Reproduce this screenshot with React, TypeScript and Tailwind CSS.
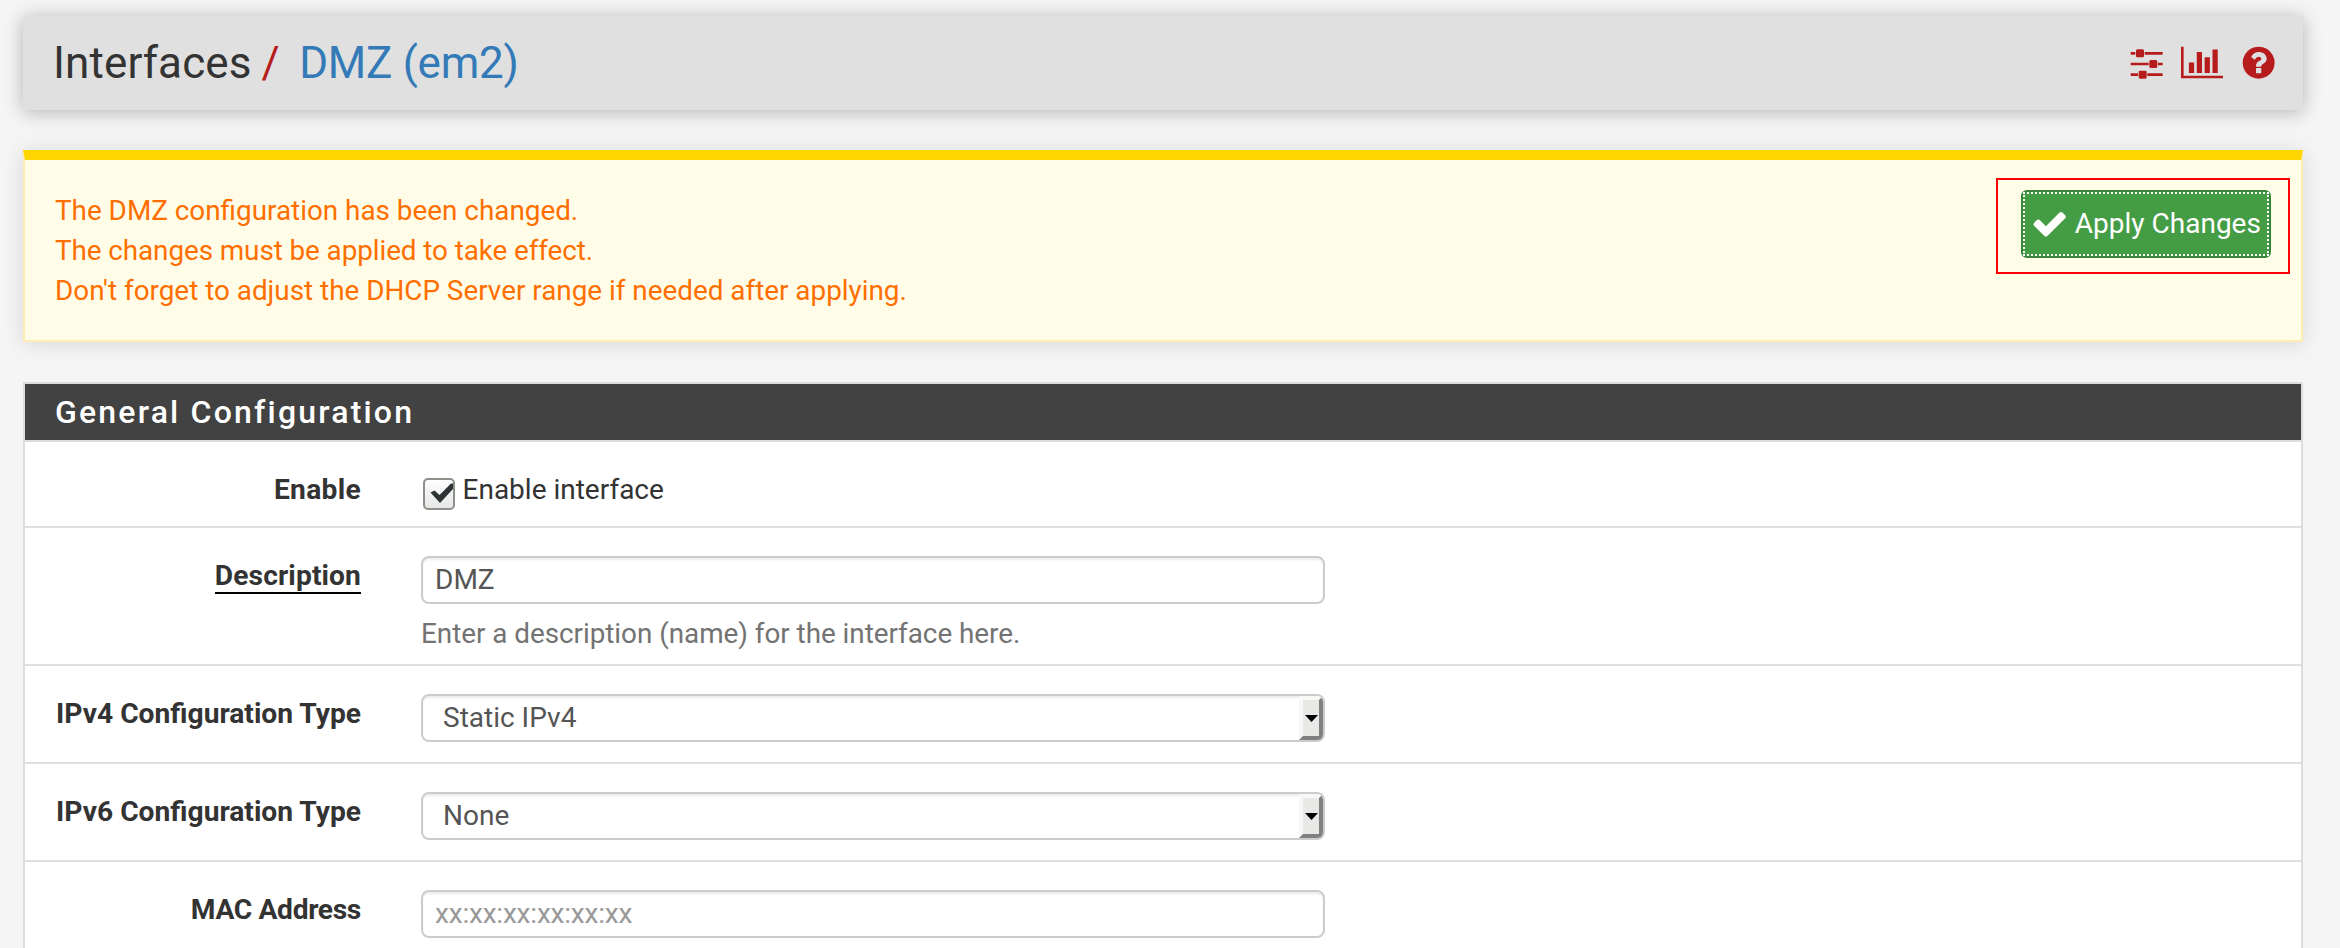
import type { ReactNode } from "react";

const PATHS = {
  sliders:
    "M480 1408v128h-352v-128h352zm352-128q26 0 45 19t19 45v256q0 26-19 45t-45 19h-256q-26 0-45-19t-19-45v-256q0-26 19-45t45-19h256zm160-384v128h-864v-128h864zm-640-512v128h-224v-128h224zm1312 1024v128h-736v-128h736zm-960-1152q26 0 45 19t19 45v256q0 26-19 45t-45 19h-256q-26 0-45-19t-19-45v-256q0-26 19-45t45-19h256zm640 512q26 0 45 19t19 45v256q0 26-19 45t-45 19h-256q-26 0-45-19t-19-45v-256q0-26 19-45t45-19h256zm320 128v128h-224v-128h224zm0-512v128h-864v-128h864z",
  chart:
    "M640 896v512h-256v-512h256zm384-512v1024h-256v-1024h256zm1024 1152v128h-2048v-1536h128v1408h1920zm-640-896v768h-256v-768h256zm384-384v1152h-256v-1152h256z",
  help:
    "M1024 1376v-192q0-14-9-23t-23-9h-192q-14 0-23 9t-9 23v192q0 14 9 23t23 9h192q14 0 23-9t9-23zm256-672q0-88-55.500-163t-138.500-116-170-41q-243 0-371 213-15 24 8 42l132 100q7 6 19 6 16 0 25-12 53-68 86-92 34-24 86-24 48 0 85.500 26t37.500 59q0 38-20 61t-68 45q-63 28-115.500 86.500t-52.500 125.500v36q0 14 9 23t23 9h192q14 0 23-9t9-23q0-19 21.500-49.500t54.500-49.500q32-18 49-28.500t46-35 44.500-48 28-60.500 12.500-81zm384 192q0 209-103 385.500t-279.500 279.500-385.500 103-385.500-103-279.500-279.500-103-385.500 103-385.500 279.500-279.500 385.500-103 385.500 103 279.500 279.500 103 385.500z",
  check:
    "M1671 566q0 40-28 68l-724 724-136 136q-28 28-68 28t-68-28l-136-136-362-362q-28-28-28-68t28-68l136-136q28-28 68-28t68 28l294 295 656-657q28-28 68-28t68 28l136 136q28 28 28 68z",
};

function Icon({ name, wide = false }: { name: keyof typeof PATHS; wide?: boolean }) {
  return (
    <svg
      viewBox={wide ? "0 0 2048 1792" : "0 0 1792 1792"}
      className={wide ? "h-[37px] w-[42px] shrink-0" : "h-[37.33px] w-[37.33px] shrink-0"}
      fill="currentColor"
      aria-hidden="true"
    >
      <path d={PATHS[name]} />
    </svg>
  );
}

function Row({
  label,
  required = false,
  tracking = "",
  className,
  children,
}: {
  label: string;
  required?: boolean;
  tracking?: string;
  className: string;
  children: ReactNode;
}) {
  return (
    <div className={`flex gap-[60px] border-b-2 border-[#e0e0e0] pt-7 ${className}`}>
      <div className={`w-[336px] shrink-0 text-right text-[28.200px] leading-10 font-bold whitespace-nowrap ${tracking}`}>
        <span className={required ? "inline-block h-[38px] border-b-2 border-black" : undefined}>{label}</span>
      </div>
      <div className="w-[904px]">{children}</div>
    </div>
  );
}

const FIELD =
  "flex h-12 w-full items-center rounded-lg border-2 border-[#ccc] bg-white text-[28px] leading-10 text-[#555] shadow-[inset_0_2px_2px_rgba(0,0,0,0.075)]";

function Select({ value }: { value: string }) {
  return (
    <div className={`${FIELD} justify-between overflow-hidden pl-5`}>
      <span>{value}</span>
      <span className="flex h-11 w-6 items-center justify-center border-4 border-t-[#f8f8f7] border-r-[#808080] border-b-[#808080] border-l-[#f8f8f7] bg-[#e8e8e6]">
        <svg viewBox="0 0 13 7" className="h-[7px] w-[13px] shrink-0" aria-hidden="true">
          <path d="M0 0h13L6.500 7z" fill="#000" />
        </svg>
      </span>
    </div>
  );
}

export default function App() {
  return (
    <div className="h-[948px] overflow-hidden bg-[#f5f5f5] px-[23px] pt-4 pr-[37px] font-['Roboto',sans-serif] text-[#333]">
      <header className="flex h-[94px] items-center justify-between bg-[#e0e0e0] pr-[25.500px] pl-[30px] shadow-[0_2px_18px_rgba(0,0,0,0.27)]">
        <h1 className="flex text-[44px] leading-[94px]">
          <span className="tracking-[0.100px]">Interfaces</span>
          <span className="ml-[10px] text-[#b71c1c]">/</span>
          <a className="ml-[19.500px] tracking-[-0.250px] text-[#337ab7]">DMZ (em2)</a>
        </h1>
        <nav className="flex items-center text-[#b71c1c]">
          <Icon name="sliders" />
          <span className="ml-[15.400px]">
            <Icon name="chart" wide />
          </span>
          <span className="ml-[17.300px]">
            <Icon name="help" />
          </span>
        </nav>
      </header>

      <section className="mt-10 flex h-[192px] justify-between border-2 border-t-10 border-[#ffecb3] border-t-[#ffd600] bg-[#fffde7] pt-[30px] pr-[30px] pl-[30px] shadow-[0_2px_20px_rgba(0,0,0,0.12)]">
        <div className="pt-px text-[27.850px] leading-10 text-[#ff6f00]">
          <p>The DMZ configuration has been changed.</p>
          <p className="tracking-[-0.080px]">The changes must be applied to take effect.</p>
          <p>Don't forget to adjust the DHCP Server range if needed after applying.</p>
        </div>
        <div className="relative h-[68px]">
          <button className="flex h-[68px] w-[250px] rounded-[6px] border-2 border-[#398439] bg-[#449d44] text-white">
            <span className="flex h-full w-full items-center gap-[7px] border-2 border-dotted border-white pl-[5.500px] text-[28px] leading-10 whitespace-nowrap">
              <Icon name="check" />
              Apply Changes
            </span>
          </button>
          <div className="pointer-events-none absolute -top-3 -right-[19px] h-24 w-[294px] border-2 border-[#ff0000]" />
        </div>
      </section>

      <main className="mt-10 border-2 border-[#ddd] bg-white">
        <h2 className="h-[58px] border-b-2 border-[#ddd] bg-[#424242] pl-[30px] text-[32px] leading-[56px] font-medium tracking-[2.200px] text-white">
          General Configuration
        </h2>
        <Row label="Enable" tracking="tracking-[0.300px]" className="h-[86px]">
          <label className="flex text-[28px] leading-10">
            <span className="mt-2 ml-[2px] flex h-8 w-8 rounded-[5px] border-2 border-[#8f8f8a] bg-linear-to-b from-white to-[#e6e6e6]">
              <svg viewBox="0 0 28 28" className="h-7 w-7" aria-hidden="true">
                <path d="M5.500 12.500 9.500 10.500 14.500 15 26 3.500 29 3.500 29 8 15 23z" fill="#2e3436" />
              </svg>
            </span>
            <span className="ml-[7.500px]">Enable interface</span>
          </label>
        </Row>
        <Row label="Description" required tracking="tracking-[0.100px]" className="h-[138px]">
          <div className={`${FIELD} pl-3`}>DMZ</div>
          <p className="mt-[10px] text-[27.850px] leading-10 tracking-[-0.030px] text-[#737373]">
            Enter a description (name) for the interface here.
          </p>
        </Row>
        <Row label="IPv4 Configuration Type" className="h-[98px]">
          <Select value="Static IPv4" />
        </Row>
        <Row label="IPv6 Configuration Type" className="h-[98px]">
          <Select value="None" />
        </Row>
        <Row label="MAC Address" tracking="tracking-[-0.350px]" className="h-[138px]">
          <div className={`${FIELD} pl-3`}>
            <span className="tracking-[-0.200px] text-[#999]">xx:xx:xx:xx:xx:xx</span>
          </div>
        </Row>
      </main>
    </div>
  );
}
